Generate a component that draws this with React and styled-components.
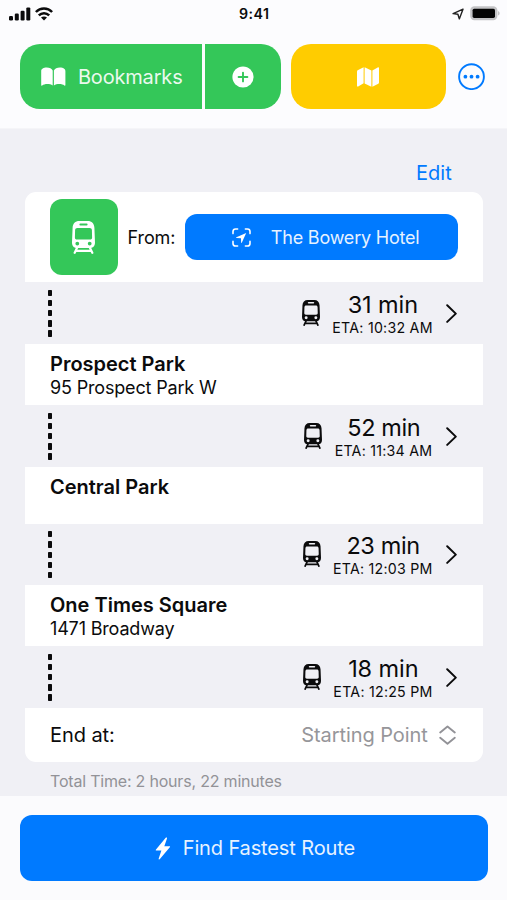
import React from 'react';
import styled, { createGlobalStyle } from 'styled-components';

const BLUE = '#007aff';
const GREEN = '#34c759';
const YELLOW = '#ffcc00';
const PAGE = '#f0f0f5';

const GlobalStyle = createGlobalStyle`
  * { box-sizing: border-box; }
  body { margin: 0; background: ${PAGE}; font-family: Inter, sans-serif; color: #0b0b0c; }
  svg { display: block; flex: none; }
`;

const Screen = styled.div`
  width: 507px;
  height: 900px;
  display: flex;
  flex-direction: column;
  overflow: hidden;
  background: ${PAGE};
`;

const TopArea = styled.header`
  height: 129px;
  background: #fcfcfe;
  border-bottom: 1px solid #f5f5f8;
`;

const StatusBar = styled.div`
  height: 26px;
  padding: 0 7.5px 0 9px;
  display: grid;
  grid-template-columns: 1fr auto 1fr;
  align-items: center;
`;

const StatusGroup = styled.div`
  display: flex;
  align-items: center;
  gap: ${(p) => p.$gap}px;
  justify-content: ${(p) => (p.$end ? 'flex-end' : 'flex-start')};
`;

const Clock = styled.div`
  font-size: 14.2px;
  font-weight: 600;
  letter-spacing: 0.5px;
  line-height: 26px;
  padding-top: 1px;
`;

const Toolbar = styled.div`
  display: flex;
  align-items: center;
  padding: 18.4px 0 0 20.4px;
`;

const ToolButton = styled.button`
  height: 64.3px;
  width: ${(p) => p.$width}px;
  margin-right: ${(p) => p.$after}px;
  padding: 0;
  border: 0;
  border-radius: ${(p) => p.$radius};
  background: ${(p) => p.$color};
  color: #fff;
  font: 400 20px/24px Inter, sans-serif;
  letter-spacing: -0.17px;
  display: flex;
  align-items: center;
  justify-content: center;
  gap: 11.7px;
`;

const BookmarksButton = styled(ToolButton)`
  padding-left: 1.2px;
`;

const ButtonText = styled.span`
  opacity: 0.9;
`;

const EditRow = styled.div`
  height: 63px;
  padding: 31.5px 55.3px 0 0;
  text-align: right;
  font-size: 20px;
  line-height: 24px;
  color: ${BLUE};
`;

const Card = styled.main`
  width: 457.7px;
  margin-left: 25px;
`;

const FromRow = styled.section`
  height: 90px;
  padding: 0 25px;
  display: flex;
  align-items: center;
  background: #fff;
  border-radius: 11px 11px 0 0;
`;

const ModeButton = styled.button`
  width: 68px;
  height: 76px;
  border: 0;
  padding: 0;
  border-radius: 12px;
  background: ${GREEN};
  display: flex;
  align-items: center;
  justify-content: center;
`;

const FromLabel = styled.span`
  width: 67.5px;
  padding-left: 9.6px;
  font-size: 18px;
  letter-spacing: -0.1px;
`;

const PlaceButton = styled.button`
  width: 272.5px;
  height: 46.5px;
  border: 0;
  padding: 1px 0 0 46.4px;
  border-radius: 12px;
  background: ${BLUE};
  color: #fff;
  font: 400 18px/24px Inter, sans-serif;
  letter-spacing: -0.2px;
  display: flex;
  align-items: center;
  gap: 20px;
`;

const Leg = styled.section`
  height: ${(p) => p.$height}px;
  padding: 0 25.5px 0 23px;
  display: flex;
  align-items: flex-start;
`;

const Dashes = styled.div`
  display: grid;
  gap: 3.9px;
  padding-top: 7.7px;
  margin-right: auto;
`;

const Dash = styled.i`
  width: 4px;
  height: 6.3px;
  border-radius: 0.7px;
  background: #0b0b0c;
`;

const TramSlot = styled.div`
  padding-top: 17.7px;
`;

const LegTimes = styled.div`
  width: ${(p) => p.$width}px;
  padding-top: 9.6px;
  margin: 0 13.2px 0 12px;
  display: flex;
  flex-direction: column;
  align-items: center;
  white-space: nowrap;
`;

const Duration = styled.div`
  padding-left: 0.6px;
  font-size: 23.5px;
  line-height: 26px;
  letter-spacing: ${(p) => p.$spacing}px;
`;

const Eta = styled.div`
  font-size: 14.2px;
  line-height: 20px;
  letter-spacing: 0.25px;
`;

const ChevronSlot = styled.div`
  padding-top: 21.8px;
`;

const Stop = styled.section`
  height: ${(p) => p.$height}px;
  padding: 8px 25px 0;
  background: #fff;
`;

const StopName = styled.h2`
  margin: 0;
  font-size: 20px;
  line-height: 24px;
  font-weight: 600;
  letter-spacing: 0;
`;

const StopAddress = styled.p`
  margin: 0;
  font-size: 18px;
  line-height: 23px;
  letter-spacing: -0.17px;
`;

const EndRow = styled.section`
  height: 54px;
  padding: 0 26.5px 0 25px;
  display: flex;
  align-items: center;
  justify-content: space-between;
  background: #fff;
  border-radius: 0 0 11px 11px;
  font-size: 20px;
  letter-spacing: -0.08px;
`;

const EndChoice = styled.div`
  display: flex;
  align-items: center;
  gap: 11.5px;
  color: #96969a;
`;

const TotalTime = styled.p`
  margin: 0;
  flex: 1;
  padding: 8.5px 0 0 50px;
  font-size: 16px;
  line-height: 20px;
  letter-spacing: -0.2px;
  color: #929297;
`;

const Footer = styled.footer`
  height: 104px;
  padding: 19.4px 19.5px 0 20.4px;
  background: #fbfbfd;
`;

const RouteButton = styled.button`
  width: 100%;
  height: 65.2px;
  border: 0;
  padding: 1px 0 0 2px;
  border-radius: 12px;
  background: ${BLUE};
  color: #fff;
  font: 400 20px/24px Inter, sans-serif;
  letter-spacing: -0.13px;
  display: flex;
  align-items: center;
  justify-content: center;
  gap: 11.8px;
`;

const SignalIcon = () => (
  <svg width="22" height="14" viewBox="0 0 22 14" fill="#0b0b0c">
    <rect x="0" y="9" width="4" height="4.4" rx="1.2" />
    <rect x="5.8" y="6.6" width="4" height="6.8" rx="1.2" />
    <rect x="11.6" y="3.8" width="4" height="9.6" rx="1.2" />
    <rect x="17.3" y="0.4" width="4" height="13" rx="1.2" />
  </svg>
);

const WifiIcon = () => (
  <svg width="18" height="14" viewBox="0 0 18 14" fill="none" stroke="#0b0b0c" strokeWidth="2.5">
    <path d="M.9 5C5.4.4 12.6.4 17.1 5" />
    <path d="M3.8 8.3C6.8 5.4 11.2 5.4 14.2 8.3" />
    <path d="M9 13.4 6 10.5C7.7 9 10.3 9 12 10.5Z" fill="#0b0b0c" stroke="none" />
  </svg>
);

const LocationIcon = () => (
  <svg width="12" height="12" viewBox="0 0 12 12" fill="none" stroke="#222" strokeWidth="1.4" strokeLinejoin="round">
    <path d="M11 1.2 1.1 5.6 5.9 6.3 7.3 10.9Z" />
  </svg>
);

const BatteryIcon = () => (
  <svg width="30" height="15" viewBox="0 0 30 15">
    <rect x=".2" y=".3" width="27.2" height="14" rx="4.2" fill="#c4c4c6" />
    <rect x="2.6" y="2.7" width="22.4" height="9.2" rx="1.6" fill="#050505" />
    <path d="M28.2 5c1.8.8 1.8 3.8 0 4.6Z" fill="#b8b8ba" />
  </svg>
);

const BookIcon = () => (
  <svg width="25" height="20" viewBox="0 0 25 20" fill="#fff">
    <path d="M11.7 18.5C9 16.6 3.4 16.5 1.2 18.6.6 19 .2 18.7.2 18V4.2C.2 1.8 2.6.5 5.6.5 8.6.5 10.8 1.6 11.7 3.6Z" />
    <path d="M12.9 18.5c2.7-1.9 8.3-2 10.5.1.6.4 1 .1 1-.6V4.2C24.4 1.8 22 .5 19 .5 16 .5 13.8 1.6 12.9 3.6Z" />
  </svg>
);

const PlusIcon = () => (
  <svg width="22" height="22" viewBox="0 0 22 22">
    <circle cx="11" cy="11" r="10.6" fill="#fff" />
    <path d="M11 6.6v8.8M6.6 11h8.8" stroke={GREEN} strokeWidth="1.9" strokeLinecap="round" />
  </svg>
);

const MapIcon = () => (
  <svg width="22" height="20" viewBox="0 0 22 20" fill="#fff">
    <path d="M6.6.2V16.3L1.2 19.5C.5 19.9 0 19.5 0 18.8V4.4C0 3.8.2 3.5.7 3.2Z" />
    <path d="M7.6.3 14.4 3.6V19.7L7.6 16.4Z" />
    <path d="M15.4 3.6 20.7.4C21.5 0 22 .4 22 1.1V15.5C22 16.1 21.8 16.4 21.3 16.7L15.4 19.8Z" />
  </svg>
);

const MoreIcon = () => (
  <svg width="27" height="27" viewBox="0 0 27 27" fill={BLUE}>
    <circle cx="13.5" cy="13.7" r="12.4" fill="none" stroke={BLUE} strokeWidth="1.9" />
    <circle cx="7.4" cy="13.7" r="1.9" />
    <circle cx="13.5" cy="13.7" r="1.9" />
    <circle cx="19.6" cy="13.7" r="1.9" />
  </svg>
);

const TramIcon = ({ width, height, color }) => (
  <svg width={width} height={height} viewBox="0 0 23 33" preserveAspectRatio="none" fill={color}>
    <path
      fillRule="evenodd"
      d="M7.4 0H15.6C19.9 0 22.1 2.6 22.4 6.8L23 21.6C23 25 21.2 27.1 18 27.1H5C1.8 27.1 0 25 0 21.6L.6 6.8C.9 2.6 3.1 0 7.4 0Z
        M8.4 2.6A1 1 0 0 0 8.4 4.6H14.6A1 1 0 0 0 14.6 2.6Z
        M5.3 7C4 7 3.2 7.8 3.1 9.1L2.9 16.4C2.9 17.8 3.6 18.6 5 18.6H18C19.4 18.6 20.1 17.8 20.1 16.4L19.9 9.1C19.8 7.8 19 7 17.7 7Z
        M5.3 20.7A1.9 1.9 0 1 0 5.3 24.5A1.9 1.9 0 1 0 5.3 20.7Z
        M17.7 20.7A1.9 1.9 0 1 0 17.7 24.5A1.9 1.9 0 1 0 17.7 20.7Z"
    />
    <path d="M5.2 26.5 2.7 31.8M17.8 26.5 20.3 31.8M4.2 29.8H18.8" fill="none" stroke={color} strokeWidth="2.2" strokeLinecap="round" />
  </svg>
);

const ScanLocationIcon = () => (
  <svg width="19" height="19" viewBox="0 0 19 19" fill="none" stroke="#fff" strokeWidth="1.6" strokeLinecap="round">
    <path d="M1 5.6V3.6C1 1.9 1.9 1 3.6 1H5.6M13.4 1H15.4C17.1 1 18 1.9 18 3.6V5.6M18 13.4V15.4C18 17.1 17.1 18 15.4 18H13.4M5.6 18H3.6C1.9 18 1 17.1 1 15.4V13.4" />
    <path d="M14.2 4.9 4.4 9.3C3.9 9.6 4.1 10.1 4.6 10.1L9 10.2 9.1 14.5C9.1 15 9.7 15.1 9.9 14.6Z" fill="#fff" stroke="none" />
  </svg>
);

const ChevronIcon = () => (
  <svg width="11" height="19" viewBox="0 0 11 19" fill="none" stroke="#0b0b0c" strokeWidth="2" strokeLinecap="round" strokeLinejoin="round">
    <path d="M1.2 1.3 9.8 9.6 1.2 17.9" />
  </svg>
);

const UpDownIcon = () => (
  <svg width="17" height="20" viewBox="0 0 17 20" fill="none" stroke="#929297" strokeWidth="1.9" strokeLinecap="round" strokeLinejoin="round">
    <path d="M1.2 7.4 8.5 1.5 15.8 7.4M1.2 12.8 8.5 18.7 15.8 12.8" />
  </svg>
);

const BoltIcon = () => (
  <svg width="16" height="23" viewBox="0 0 16 23" fill="#fff">
    <path d="M10.7.8 1 12.5C.5 13.2.7 13.6 1.4 13.6H6.4L3.7 21.5C3.4 22.5 4.3 22.8 4.9 22.1L14.8 10.3C15.3 9.6 15.1 9.2 14.4 9.2H9.3L12 1.4C12.3.4 11.3.1 10.7.8Z" />
  </svg>
);

const trip = [
  {
    leg: { height: 62, duration: '31 min', eta: 'ETA: 10:32 AM', width: 101, spacing: -0.1 },
    stop: { height: 61, name: 'Prospect Park', address: '95 Prospect Park W' },
  },
  {
    leg: { height: 61.5, duration: '52 min', eta: 'ETA: 11:34 AM', width: 99, spacing: -0.4 },
    stop: { height: 57, name: 'Central Park' },
  },
  {
    leg: { height: 61.5, duration: '23 min', eta: 'ETA: 12:03 PM', width: 100.5, spacing: -0.4 },
    stop: { height: 61, name: 'One Times Square', address: '1471 Broadway' },
  },
  {
    leg: { height: 62, duration: '18 min', eta: 'ETA: 12:25 PM', width: 100, spacing: -0.1 },
  },
];

function LegRow({ height, duration, eta, width, spacing }) {
  return (
    <Leg $height={height}>
      <Dashes>
        {[0, 1, 2, 3, 4].map((n) => (
          <Dash key={n} />
        ))}
      </Dashes>
      <TramSlot>
        <TramIcon width={18} height={26} color="#0b0b0c" />
      </TramSlot>
      <LegTimes $width={width}>
        <Duration $spacing={spacing}>{duration}</Duration>
        <Eta>{eta}</Eta>
      </LegTimes>
      <ChevronSlot>
        <ChevronIcon />
      </ChevronSlot>
    </Leg>
  );
}

export default function App() {
  return (
    <Screen>
      <GlobalStyle />
      <TopArea>
        <StatusBar>
          <StatusGroup $gap={4.2}>
            <SignalIcon />
            <WifiIcon />
          </StatusGroup>
          <Clock>9:41</Clock>
          <StatusGroup $gap={5.5} $end>
            <LocationIcon />
            <BatteryIcon />
          </StatusGroup>
        </StatusBar>
        <Toolbar>
          <BookmarksButton $width={181.8} $after={2.5} $color={GREEN} $radius="20px 0 0 20px">
            <BookIcon />
            <ButtonText>Bookmarks</ButtonText>
          </BookmarksButton>
          <ToolButton $width={76.6} $after={9.8} $color={GREEN} $radius="0 20px 20px 0" aria-label="Add bookmark">
            <PlusIcon />
          </ToolButton>
          <ToolButton $width={154.8} $after={11.9} $color={YELLOW} $radius="20px" aria-label="Map">
            <MapIcon />
          </ToolButton>
          <MoreIcon />
        </Toolbar>
      </TopArea>

      <EditRow>Edit</EditRow>

      <Card>
        <FromRow>
          <ModeButton aria-label="Transit">
            <TramIcon width={23} height={33} color="#fff" />
          </ModeButton>
          <FromLabel>From:</FromLabel>
          <PlaceButton>
            <ScanLocationIcon />
            <ButtonText>The Bowery Hotel</ButtonText>
          </PlaceButton>
        </FromRow>
        {trip.map(({ leg, stop }) => (
          <React.Fragment key={leg.eta}>
            <LegRow {...leg} />
            {stop && (
              <Stop $height={stop.height}>
                <StopName>{stop.name}</StopName>
                {stop.address && <StopAddress>{stop.address}</StopAddress>}
              </Stop>
            )}
          </React.Fragment>
        ))}
        <EndRow>
          <span>End at:</span>
          <EndChoice>
            <span>Starting Point</span>
            <UpDownIcon />
          </EndChoice>
        </EndRow>
      </Card>

      <TotalTime>Total Time: 2 hours, 22 minutes</TotalTime>

      <Footer>
        <RouteButton>
          <BoltIcon />
          <ButtonText>Find Fastest Route</ButtonText>
        </RouteButton>
      </Footer>
    </Screen>
  );
}
